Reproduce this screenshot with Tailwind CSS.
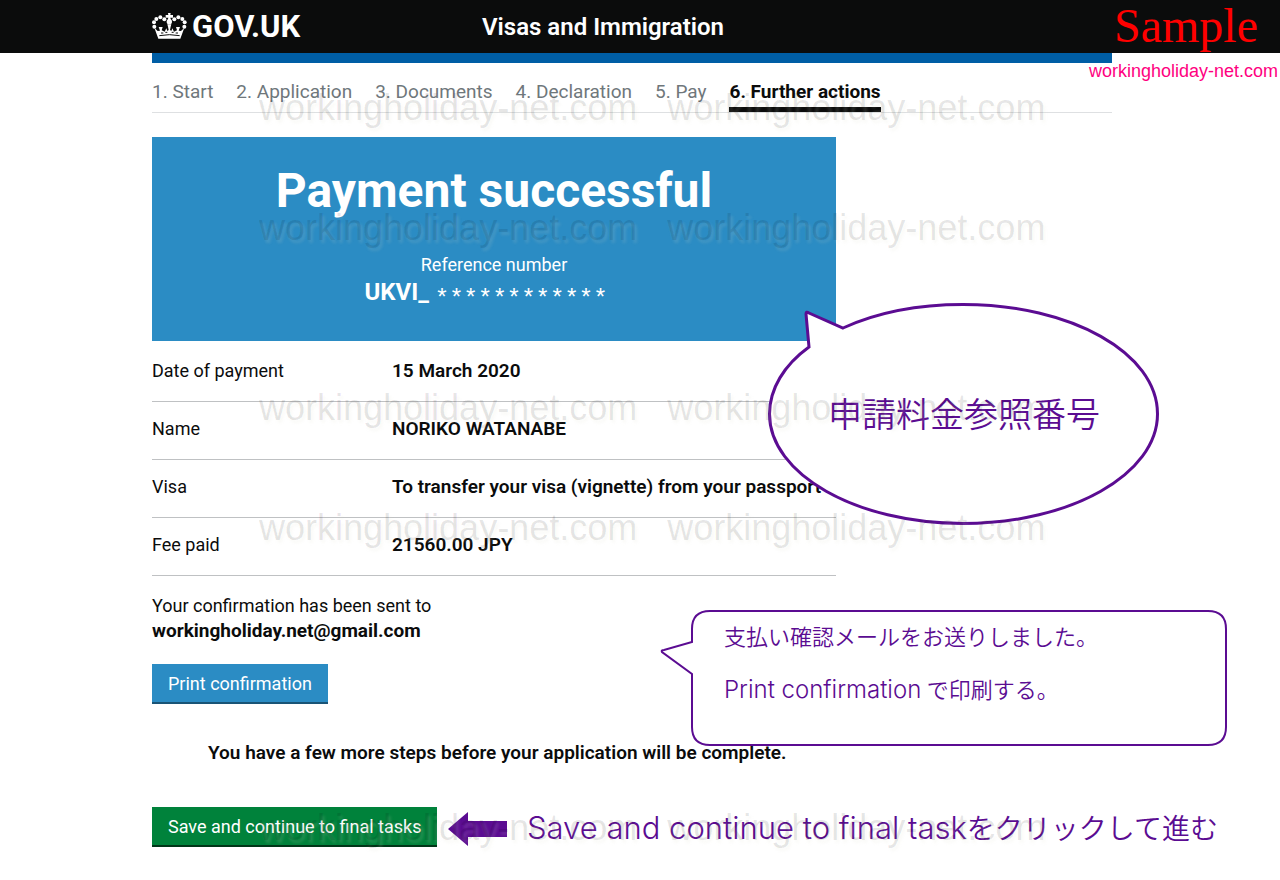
<!DOCTYPE html>
<html lang="en">
<head>
    <meta charset="UTF-8">
    <meta name="viewport" content="width=device-width, initial-scale=1.0">
    <title>Payment successful - Visas and Immigration - GOV.UK</title>
    <!-- Tailwind CSS CDN -->
    <script src="https://cdn.jsdelivr.net/npm/@tailwindcss/browser@4"></script>
</head>
<body class="bg-white text-[#0b0c0c] font-['Roboto','Noto_Sans_CJK_JP',sans-serif] text-lg leading-[25px] min-h-screen relative overflow-x-hidden">
    <header class="bg-[#0b0c0c] text-white relative pr-4">
        <div class="max-w-[960px] mx-auto h-[53px] flex items-center">
            <a href="#" class="flex items-center gap-[5px] w-[330px] text-[31px] font-bold leading-none">
                <svg class="w-[35px] h-[28px]" viewBox="0 0 105 84" fill="currentColor" aria-hidden="true">
                    <path d="M48 0h8l-1 6h8v8h-8l2 8h-10l2-8h-8v-8h8z"/>
                    <circle cx="52" cy="26" r="8"/>
                    <circle cx="37" cy="19" r="6"/>
                    <circle cx="25" cy="13" r="6"/>
                    <circle cx="13" cy="18" r="6"/>
                    <circle cx="6" cy="28" r="6"/>
                    <circle cx="7" cy="41" r="6"/>
                    <circle cx="67" cy="19" r="6"/>
                    <circle cx="79" cy="13" r="6"/>
                    <circle cx="91" cy="18" r="6"/>
                    <circle cx="98" cy="28" r="6"/>
                    <circle cx="97" cy="41" r="6"/>
                    <path d="M7 44l10 10 7-1-4-11h12l-3 10 9 4 5-10 3 8 4-3-2-10-2-7h12l-2 7-2 10 4 3 3-8 5 10 9-4-3-10h12l-4 11 7 1 10-10-12 33H19z"/>
                    <path d="M22 68q30-6 61 0M27 60h7M40 58h6M59 58h6M71 60h7" fill="none" stroke="#0b0c0c" stroke-width="3"/>
                </svg>
                <span>GOV.UK</span>
            </a>
            <a href="#" class="text-2xl font-semibold">Visas and Immigration</a>
        </div>
        <div class="absolute right-[22px] top-0 text-[48px] leading-[52px] text-[#ff0000] font-['Liberation_Serif',serif]">Sample</div>
        <div class="absolute right-[2px] top-[60px] text-lg leading-[22px] text-[#ff0080] font-['Liberation_Sans',sans-serif]">workingholiday-net.com</div>
    </header>

    <div class="pr-4">
        <main class="max-w-[960px] mx-auto relative border-t-10 border-[#005ea5]">
            <nav class="mb-6 border-b border-[#dee0e2]">
                <ol class="flex gap-[23px] text-[19px] text-[#6f777b]">
                    <li class="pt-4 pb-2">1. Start</li>
                    <li class="pt-4 pb-2">2. Application</li>
                    <li class="pt-4 pb-2">3. Documents</li>
                    <li class="pt-4 pb-2">4. Declaration</li>
                    <li class="pt-4 pb-2">5. Pay</li>
                    <li class="pt-4 pb-[3px] border-b-5 border-[#0b0c0c] text-[#0b0c0c] font-bold">6. Further actions</li>
                </ol>
            </nav>

            <div class="max-w-[684px]">
                <section class="bg-[#2b8cc4] text-white text-center h-[204px] pt-[29px]">
                    <h1 class="text-5xl leading-[50px] font-bold">Payment successful</h1>
                    <p class="mt-9">Reference number</p>
                    <p class="text-2xl leading-[30px] font-bold pr-4">UKVI_ <span class="align-sub leading-none font-normal font-['Liberation_Mono',monospace]">************</span></p>
                </section>

                <table class="w-full text-left">
                    <tbody>
                        <tr class="border-b border-[#bfc1c3]"><th class="w-[240px] pt-[17px] pb-[18px] font-normal">Date of payment</th><td class="pt-[17px] pb-[18px] text-[19px] font-semibold whitespace-nowrap">15 March 2020</td></tr>
                        <tr class="border-b border-[#bfc1c3]"><th class="pt-[14px] pb-[18px] font-normal">Name</th><td class="pt-[14px] pb-[18px] text-[19px] font-semibold whitespace-nowrap">NORIKO WATANABE</td></tr>
                        <tr class="border-b border-[#bfc1c3]"><th class="pt-[14px] pb-[18px] font-normal">Visa</th><td class="pt-[14px] pb-[18px] text-[19px] font-semibold whitespace-nowrap">To transfer your visa (vignette) from your passport</td></tr>
                        <tr class="border-b border-[#bfc1c3]"><th class="pt-[14px] pb-[18px] font-normal">Fee paid</th><td class="pt-[14px] pb-[18px] text-[19px] font-semibold whitespace-nowrap">21560.00 JPY</td></tr>
                    </tbody>
                </table>

                <p class="mt-[17px]">Your confirmation has been sent to<br><strong class="text-[19px] font-bold">workingholiday.net@gmail.com</strong></p>
                <button type="button" class="mt-[21px] h-10 px-4 bg-[#2b8cc4] border-b-2 border-[#1a5476] text-white">Print confirmation</button>
                <p class="mt-9 ml-14 text-[19px] font-semibold">You have a few more steps before your application will be complete.</p>
                <button type="button" class="mt-[42px] h-10 px-4 bg-[#00823b] border-b-2 border-[#003618] text-white">Save and continue to final tasks</button>
            </div>

            <!-- speech bubble: payment reference -->
            <div class="absolute left-[612px] top-[236px] w-[400px] h-[228px] flex items-center justify-center text-[#5b0c92]">
                <svg class="absolute inset-0 w-full h-full" viewBox="764 299 400 228" aria-hidden="true">
                    <path d="M809 347L806 314Q806 311 809 313L843 328C878 312 919 304.500 963 304.500C1071 304.500 1157.500 353 1157.500 414C1157.500 474 1071 523.500 963 523.500C856 523.500 769.500 474 769.500 414C769.500 389 784 365 809 347Z" fill="white" stroke="#5b0c92" stroke-width="3"/>
                </svg>
                <span lang="ja" class="relative pt-1 text-[34px] font-[350]">申請料金参照番号</span>
            </div>

            <!-- speech bubble: confirmation mail -->
            <div class="absolute left-[508px] top-[546px] w-[568px] h-[138px] text-[#5b0c92]">
                <svg class="absolute inset-0 w-full h-full" viewBox="660 609 568 138" aria-hidden="true">
                    <path d="M710 611H1208Q1226 611 1226 629V727Q1226 745 1208 745H710Q692 745 692 727V674L662 652Q661 650 664 650L692 642V629Q692 611 710 611Z" fill="white" stroke="#5b0c92" stroke-width="2"/>
                </svg>
                <div lang="ja" class="relative pl-16 pt-4 text-[22px] leading-[26px] font-[350]">
                    <p>支払い確認メールをお送りしました。</p>
                    <p class="mt-[26px]"><span class="text-2xl leading-[26px] font-light font-['Inter',sans-serif]">Print confirmation</span> で印刷する。</p>
                </div>
            </div>

            <!-- arrow pointing at the continue button -->
            <div class="absolute left-[296px] top-[748px] flex items-center gap-5 text-[#5b0c92] whitespace-nowrap">
                <svg class="w-[59px] h-[34px]" viewBox="0 0 59 34" fill="currentColor" aria-hidden="true">
                    <path d="M0 17L20 0V9H59V25H20V34Z"/>
                </svg>
                <p lang="ja" class="text-[28px] leading-[34px] font-[350]"><span class="text-[31px] leading-[34px] font-light font-['Inter',sans-serif]">Save and continue to final task</span>をクリックして進む</p>
            </div>

            <!-- watermarks -->
            <div class="absolute left-[107px] top-[25px] pointer-events-none select-none font-['Liberation_Sans',sans-serif] text-4xl leading-10 text-black/10 [text-shadow:2px_3px_3px_rgb(220_220_200/0.15)]" aria-hidden="true">
                <div class="flex gap-[30px]"><span>workingholiday-net.com</span><span>workingholiday-net.com</span></div>
                <div class="flex gap-[30px] mt-20"><span>workingholiday-net.com</span><span>workingholiday-net.com</span></div>
                <div class="flex gap-[30px] mt-35"><span>workingholiday-net.com</span><span>workingholiday-net.com</span></div>
                <div class="flex gap-[30px] mt-20"><span>workingholiday-net.com</span><span>workingholiday-net.com</span></div>
                <div class="flex gap-[30px] mt-65"><span>workingholiday-net.com</span><span>workingholiday-net.com</span></div>
            </div>
        </main>
    </div>
</body>
</html>
